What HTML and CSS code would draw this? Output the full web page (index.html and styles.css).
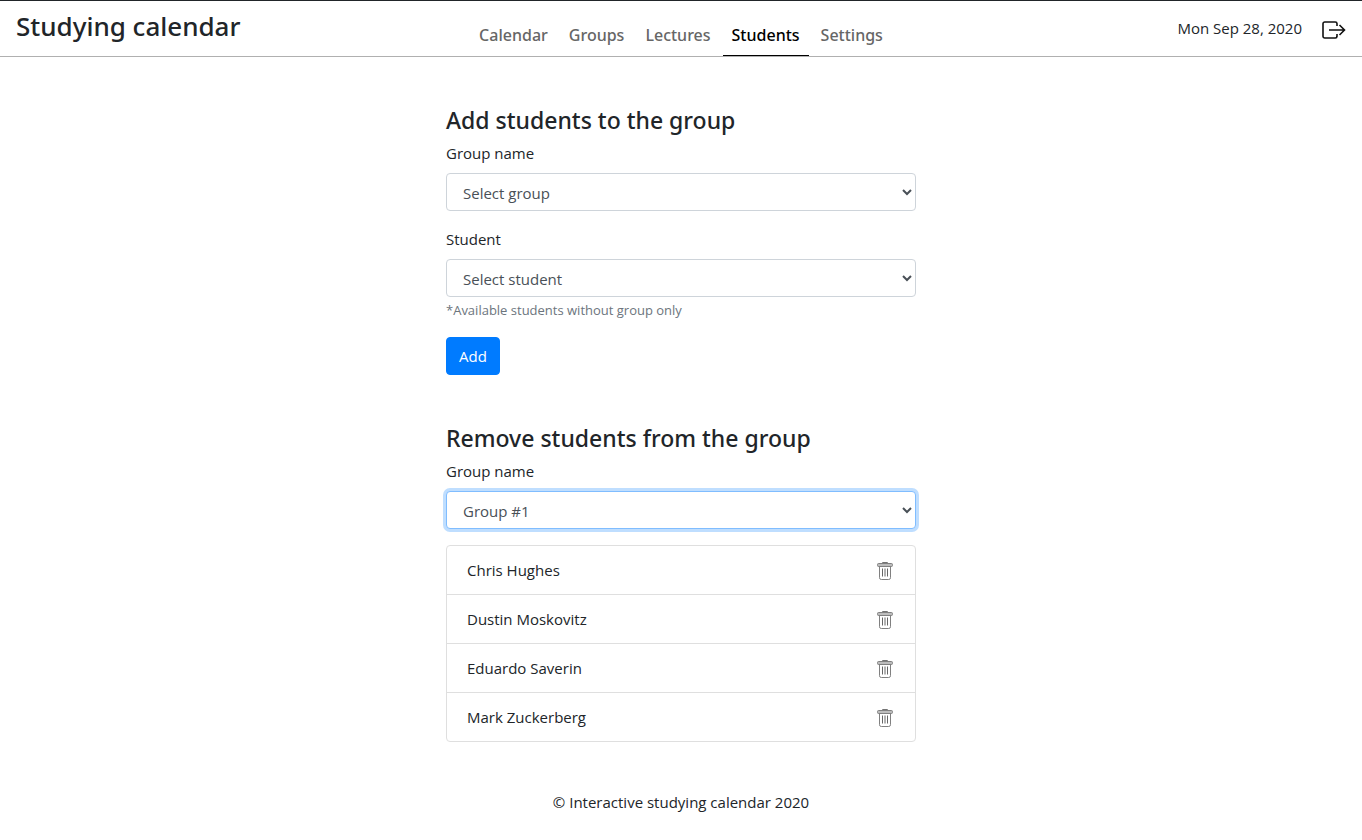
FILE: index.html
```html
<!DOCTYPE html>
<html lang="en">
<head>
<meta charset="utf-8">
<meta name="viewport" content="width=device-width, initial-scale=1">
<title>Studying calendar</title>
<link rel="stylesheet" href="styles.css">
</head>
<body>
<svg class="sprite" aria-hidden="true">
  <symbol id="trash" viewBox="0 0 16 18">
    <path d="M5.5 1.5V.6h5v.9" fill="none" stroke="#666"/>
    <rect x=".6" y="1.5" width="14.8" height="3" rx=".8" fill="#bdbdbd" stroke="#808080"/>
    <path d="M2.5 4.5v11.2a1.8 1.8 0 0 0 1.8 1.8h7.4a1.8 1.8 0 0 0 1.8-1.8V4.5" fill="none" stroke="#808080"/>
    <path d="M5.5 6.5v8M8 6.5v8M10.5 6.5v8" fill="none" stroke="#666"/>
  </symbol>
</svg>
<header class="header">
  <h1 class="brand">Studying calendar</h1>
  <nav class="nav">
    <a class="nav-link" href="#calendar">Calendar</a>
    <a class="nav-link" href="#groups">Groups</a>
    <a class="nav-link" href="#lectures">Lectures</a>
    <a class="nav-link active" href="#students" aria-current="page">Students</a>
    <a class="nav-link" href="#settings">Settings</a>
  </nav>
  <div class="session">
    <span class="date">Mon Sep 28, 2020</span>
    <button class="icon-button" type="button" aria-label="Log out">
      <svg width="24" height="18" viewBox="0 0 24 18" fill="none" stroke="#111" stroke-width="1.6">
        <path d="M15 5V2.6A1.7 1.7 0 0 0 13.3 1H2.7A1.7 1.7 0 0 0 1 2.7v12.6A1.7 1.7 0 0 0 2.7 17h10.6a1.7 1.7 0 0 0 1.7-1.6V13"/>
        <path d="M7 9h15.5M17.5 4l5 5-5 5"/>
      </svg>
    </button>
  </div>
</header>
<main class="content">
  <form class="section">
    <h2 class="title">Add students to the group</h2>
    <div class="field">
      <label for="add-group">Group name</label>
      <select class="select" id="add-group"><option>Select group</option></select>
    </div>
    <div class="field">
      <label for="add-student">Student</label>
      <select class="select" id="add-student"><option>Select student</option></select>
      <small class="hint">*Available students without group only</small>
    </div>
    <button class="primary" type="button">Add</button>
  </form>
  <section class="section">
    <h2 class="title">Remove students from the group</h2>
    <div class="field">
      <label for="remove-group">Group name</label>
      <select class="select focused" id="remove-group"><option>Group #1</option></select>
    </div>
    <ul class="list">
      <li class="row">Chris Hughes <button class="icon-button" type="button" aria-label="Remove Chris Hughes"><svg width="16" height="18"><use href="#trash"/></svg></button></li>
      <li class="row">Dustin Moskovitz <button class="icon-button" type="button" aria-label="Remove Dustin Moskovitz"><svg width="16" height="18"><use href="#trash"/></svg></button></li>
      <li class="row">Eduardo Saverin <button class="icon-button" type="button" aria-label="Remove Eduardo Saverin"><svg width="16" height="18"><use href="#trash"/></svg></button></li>
      <li class="row">Mark Zuckerberg <button class="icon-button" type="button" aria-label="Remove Mark Zuckerberg"><svg width="16" height="18"><use href="#trash"/></svg></button></li>
    </ul>
  </section>
</main>
<footer class="footer">© Interactive studying calendar 2020</footer>
</body>
</html>
```
FILE: styles.css
```css
*, *::before, *::after { box-sizing: border-box; }
body {
  margin: 0;
  color: #212529;
  background: #fff;
  font: 15px/24px "Open Sans", "Noto Sans", sans-serif;
}
button, select { font: inherit; }
h1, h2, ul { margin: 0; padding: 0; }
.sprite { display: none; }
.header {
  display: grid;
  grid-template-columns: 1fr auto 1fr;
  align-items: stretch;
  min-height: 57px;
  padding: 0 16px;
  border-top: 1px solid #212529;
  border-bottom: 1px solid #b0b0b0;
}
.brand, .title, .nav-link { font-family: "Noto Sans", "Open Sans", sans-serif; font-weight: 500; }
.brand { padding-top: 8px; font-size: 26px; line-height: 34px; }
.nav { display: flex; gap: 3px; padding-top: 14px; }
.nav-link {
  padding: 8px 9px 0;
  color: #666;
  font-size: 16px;
  text-decoration: none;
  border-bottom: 1px solid transparent;
}
.nav-link.active { color: #000; border-color: #000; }
.session { display: flex; align-items: center; justify-content: flex-end; gap: 20px; padding-top: 2px; }
.date { padding-bottom: 4px; }
.icon-button { display: flex; padding: 0; border: 0; background: none; cursor: pointer; }
.content { width: 100%; max-width: 500px; margin: 0 auto; padding: 48px 15px 0; }
.section { margin-bottom: 48px; }
.title { margin-bottom: 6px; font-size: 23px; line-height: 30px; }
.field { margin-bottom: 16px; }
.field label { display: block; margin-bottom: 8px; }
.select {
  display: block;
  width: 100%;
  height: 38px;
  padding: 7px 13px 5px 12px;
  color: #495057;
  background: #fff;
  border: 1px solid #ced4da;
  border-radius: 4px;
}
.select.focused { border-color: #80bdff; box-shadow: 0 0 0 3px #bfdeff; }
.hint { display: block; margin-top: 3px; margin-bottom: 17px; color: #6c757d; font-size: 13px; line-height: 20px; }
.primary { padding: 6px 12px; color: #fff; background: #007bff; border: 1px solid #007bff; border-radius: 4px; }
.list { list-style: none; border: 1px solid #dfdfdf; border-radius: 4px; }
.row { display: flex; align-items: center; justify-content: space-between; padding: 12px 22px 12px 20px; }
.row .icon-button { padding-top: 2px; }
.row + .row { border-top: 1px solid #dfdfdf; }
.footer { padding-bottom: 24px; text-align: center; }
```
